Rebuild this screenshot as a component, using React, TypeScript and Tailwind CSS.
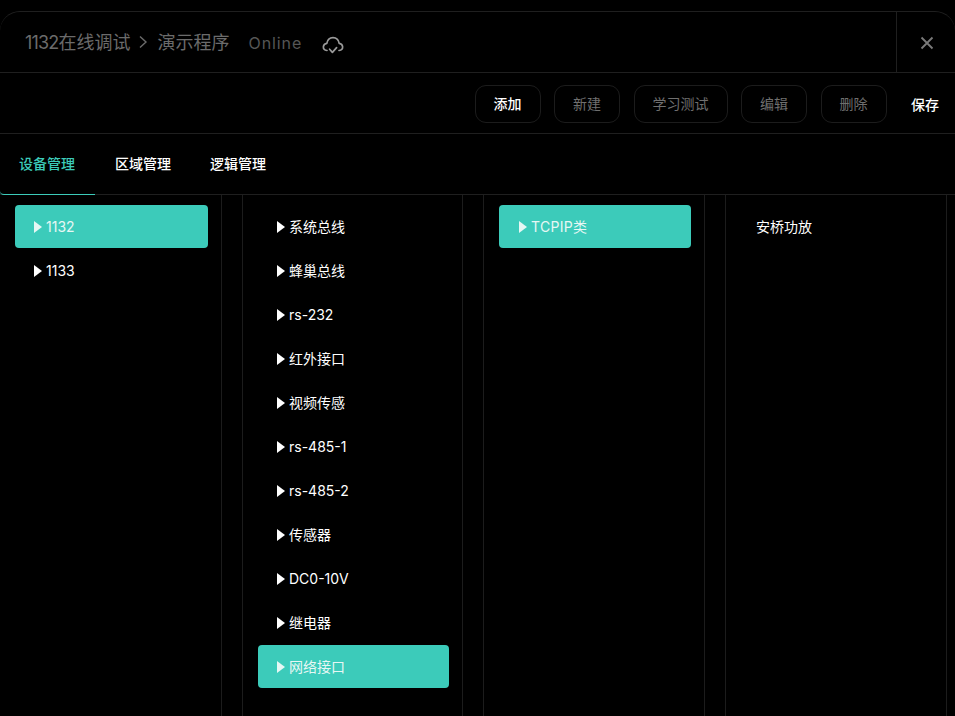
const font = "font-['Inter','Noto_Sans_CJK_SC',sans-serif]";

const buses = ["系统总线", "蜂巢总线", "rs-232", "红外接口", "视频传感", "rs-485-1", "rs-485-2", "传感器", "DC0-10V", "继电器", "网络接口"];

function Caret() {
  return (
    <svg width="8" height="12" viewBox="0 0 8 12" className="shrink-0" fill="currentColor">
      <path d="M0 0L8 6L0 12Z" />
    </svg>
  );
}

function Row({ label, active, caret = true, inset = "pl-[19px]" }: { label: string; active?: boolean; caret?: boolean; inset?: string }) {
  // chinese labels sit a little higher than latin ones in the reference
  const isCjk = /^[^\x00-\x7f]/.test(label);
  return (
    <div
      className={`mb-px flex h-[43px] items-center gap-[4px] rounded-[4px] text-[14px] ${inset} ${
        active ? "bg-[#3ccbba] text-[#e6f7f4]" : "text-white"
      }`}
    >
      {caret && <Caret />}
      <span className={isCjk ? "pb-px" : ""}>{label}</span>
    </div>
  );
}

function ToolButton({ label, primary }: { label: string; primary?: boolean }) {
  return (
    <button
      className={`h-[38px] rounded-[11px] border border-[#1c1c1c] px-[18px] text-[14px] leading-none ${
        primary ? "font-medium text-white" : "text-[#6f6f6f]"
      }`}
    >
      {label}
    </button>
  );
}

export default function App() {
  return (
    <div className={`${font} h-[716px] w-[955px] overflow-hidden bg-black pt-[11px]`}>
      <div className="h-[705px] rounded-t-[20px] border-t border-[#1f1f1f]">
        {/* Header */}
        <div className="flex h-[61px] items-center border-b border-[#1f1f1f]">
          <div className="flex flex-1 items-center pl-[25px] text-[#6b6b6b]">
            <span className="text-[18px]">
              <span className="tracking-[-0.8px]">1132</span>在线调试
            </span>
            <svg width="10" height="14" viewBox="0 0 10 14" fill="none" stroke="currentColor" strokeWidth="1.4" className="ml-[7px]">
              <path d="M2 1.5L8 7L2 12.5" />
            </svg>
            <span className="ml-[10px] text-[18px]">演示程序</span>
            <span className="ml-[19px] mt-[2px] text-[16px] tracking-[0.9px] text-[#565656]">Online</span>
            <svg width="22" height="20" viewBox="0 0 22 20" fill="none" stroke="#9a9a9a" strokeWidth="1.7" strokeLinecap="round" strokeLinejoin="round" className="ml-[20px] mt-[6px]">
              <path d="M5 15.5C2.6 15.2 1.2 13.6 1.4 11.6C1.6 9.8 3 8.6 4.8 8.4C5.4 5 7.8 2.6 11 2.6C14.2 2.6 16.6 5 17.2 8.4C19 8.6 20.4 9.8 20.6 11.6C20.8 13.6 19.4 15.2 17 15.5" />
              <path d="M7.6 14.2L10.4 17.4L14.6 12.6" />
            </svg>
          </div>
          <div className="flex h-full w-[59px] items-center justify-center border-l border-[#1f1f1f] pl-px pt-px text-[#7a7a7a]">
            <svg width="14" height="14" viewBox="0 0 14 14" stroke="currentColor" strokeWidth="1.8" fill="none">
              <path d="M1.5 1.5L12.5 12.5M12.5 1.5L1.5 12.5" />
            </svg>
          </div>
        </div>

        {/* Toolbar */}
        <div className="flex h-[61px] items-center justify-end gap-[13.5px] border-b border-[#1f1f1f] pr-[16px] pt-[2px]">
          <ToolButton label="添加" primary />
          <ToolButton label="新建" />
          <ToolButton label="学习测试" />
          <ToolButton label="编辑" />
          <ToolButton label="删除" />
          <span className="ml-[11px] text-[14px] font-medium text-white">保存</span>
        </div>

        {/* Tabs */}
        <div className="flex h-[61px] items-stretch border-b border-[#1f1f1f] text-[14px] font-medium text-white">
          <div className="-mb-px flex w-[95px] items-center rounded-bl-[4px] border-b border-[#3ccbba] pb-[2px] pl-[19px] text-[#3ccbba]">设备管理</div>
          <div className="flex items-center pb-[2px] pl-[20px]">区域管理</div>
          <div className="flex items-center pb-[2px] pl-[39px]">逻辑管理</div>
        </div>

        {/* Columns */}
        <div className="flex h-[521px] gap-[20px]">
          <div className="w-[222px] border-r border-[#1c1c1c] pl-[15px] pr-[13px] pt-[10px]">
            <Row label="1132" active />
            <Row label="1133" />
          </div>
          <div className="w-[221px] border-x border-[#1c1c1c] pl-[15px] pr-[13px] pt-[10px]">
            {buses.map((b) => (
              <Row key={b} label={b} active={b === "网络接口"} />
            ))}
          </div>
          <div className="w-[222px] border-x border-[#1c1c1c] pl-[15px] pr-[13px] pt-[10px]">
            <Row label="TCPIP类" active inset="pl-[20px] tracking-[0.3px]" />
          </div>
          <div className="w-[222px] border-x border-[#1c1c1c] pl-[12px] pr-[13px] pt-[10px]">
            <Row label="安桥功放" caret={false} inset="pl-[18px]" />
          </div>
        </div>
      </div>
    </div>
  );
}
